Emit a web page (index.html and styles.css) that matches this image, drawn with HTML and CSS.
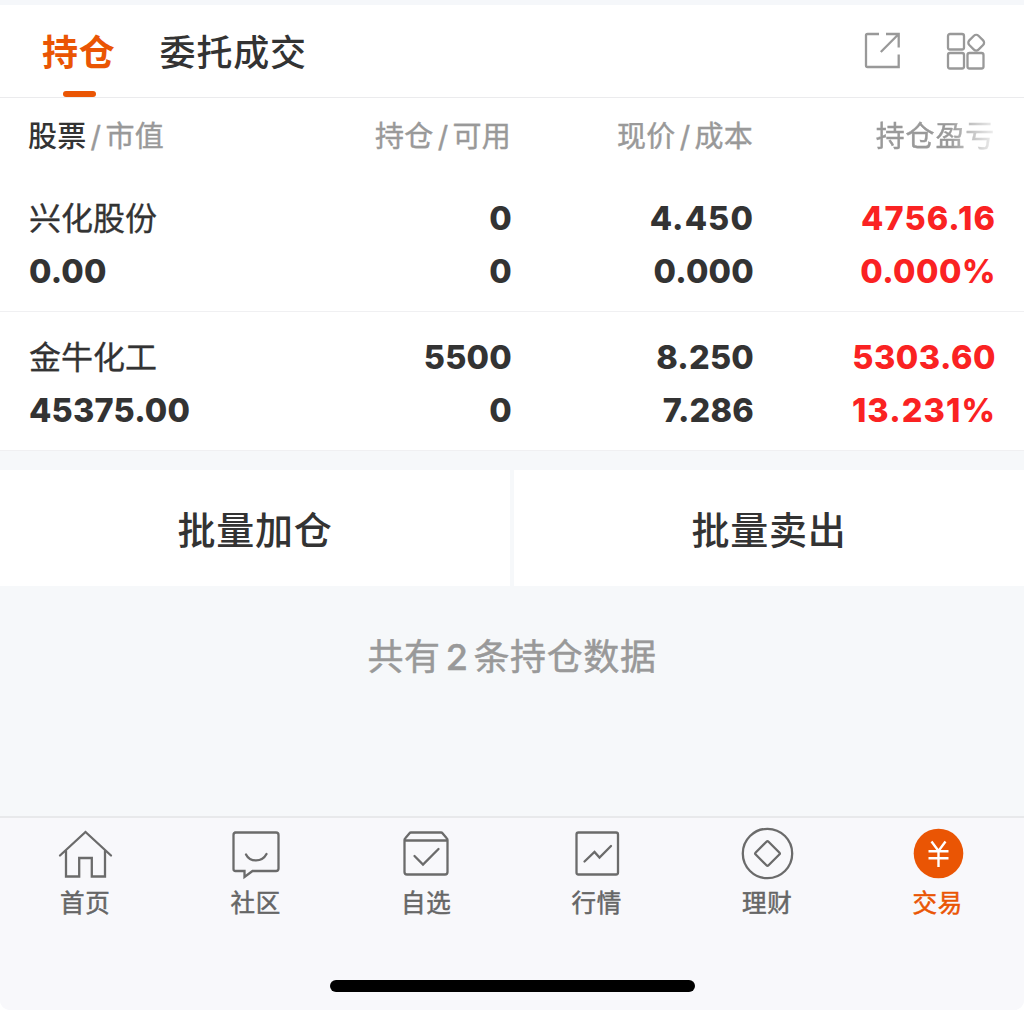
FILE: index.html
```html
<!DOCTYPE html>
<html lang="zh-CN">
<head>
<meta charset="utf-8">
<title>持仓</title>
<link rel="stylesheet" href="styles.css">
</head>
<body>
<div class="app">
  <header class="header">
    <nav class="tabs">
      <a class="tab tab-active">持仓</a>
      <a class="tab">委托成交</a>
    </nav>
    <div class="tools">
      <svg class="tool-icon" width="40" height="40" viewBox="0 0 40 40">
        <path d="M17 3H5.500Q4 3 4 4.500V34.500Q4 36 5.500 36H36.700V23.500M24 3H36.700V16.500M36.700 3L18.800 21"/>
      </svg>
      <svg class="tool-icon" width="42" height="40" viewBox="0 0 42 40">
        <rect x="4" y="3" width="16" height="15.500" rx="2"/>
        <rect x="4" y="22" width="16" height="15.500" rx="2"/>
        <rect x="23.500" y="22" width="16" height="15.500" rx="2"/>
        <rect x="25.700" y="5.200" width="13" height="13" rx="3.200" transform="rotate(45 32.200 11.700)"/>
      </svg>
    </div>
  </header>

  <main>
    <section class="table">
      <div class="row row-head">
        <div><span class="strong">股票</span><i>/</i>市值</div>
        <div>持仓<i>/</i>可用</div>
        <div>现价<i>/</i>成本</div>
        <div class="fade">持仓盈亏</div>
      </div>
      <div class="row">
        <div><span class="name">兴化股份</span><span>0.00</span></div>
        <div><span>0</span><span>0</span></div>
        <div><span class="wide">4.450</span><span>0.000</span></div>
        <div class="gain"><span class="wide">4756.16</span><span>0.000%</span></div>
      </div>
      <div class="row">
        <div><span class="name">金牛化工</span><span>45375.00</span></div>
        <div><span>5500</span><span>0</span></div>
        <div><span>8.250</span><span>7.286</span></div>
        <div class="gain"><span>5303.60</span><span class="wide">13.231%</span></div>
      </div>
    </section>
    <section class="actions">
      <div class="action">批量加仓</div>
      <div class="action">批量卖出</div>
    </section>
    <p class="summary">共有<b>2</b>条持仓数据</p>
  </main>

  <footer class="footer">
    <nav class="navbar">
      <a class="nav-item">
        <svg width="56" height="56" viewBox="0 0 56 56"><path d="M3 28.500L28.500 5L54 28.500M9 24V49.500H22.200V31H34.800V49.500H48V24"/></svg>
        <span>首页</span>
      </a>
      <a class="nav-item">
        <svg width="56" height="56" viewBox="0 0 56 56"><path d="M7 5.500H48Q50.500 5.500 50.500 8V41.500Q50.500 44 48 44H24.500L16.500 50V44H7.500Q5.500 44 5.500 42V8Q5.500 5.500 8 5.500M18 27.500C22 35.500 34 35.500 38.500 27"/></svg>
        <span>社区</span>
      </a>
      <a class="nav-item">
        <svg width="56" height="56" viewBox="0 0 56 56"><path d="M13 5.500H43Q44 5.500 44.500 6.300L48.500 11Q49.500 12 49.500 13V45Q49.500 47.500 47 47.500H9Q6.500 47.500 6.500 45V13Q6.500 12 7.500 11L11.500 6.300Q12 5.500 13 5.500ZM6.500 13.500H49.500M16.500 29L25 37.500L40.500 22"/></svg>
        <span>自选</span>
      </a>
      <a class="nav-item">
        <svg width="56" height="56" viewBox="0 0 56 56"><rect x="7.500" y="5.500" width="41.500" height="42" rx="2"/><path d="M15.500 34.500L25.500 25L30.500 30.500L42 19"/></svg>
        <span>行情</span>
      </a>
      <a class="nav-item">
        <svg width="56" height="56" viewBox="0 0 56 56"><circle cx="28.500" cy="26.500" r="24.700"/><rect x="19.400" y="17.400" width="18.200" height="18.200" rx="1.500" transform="rotate(45 28.500 26.500)"/></svg>
        <span>理财</span>
      </a>
      <a class="nav-item nav-active">
        <svg width="56" height="56" viewBox="0 0 56 56"><circle class="coin" cx="28.500" cy="26.500" r="24.800"/><path class="yen" d="M21.500 14.500L28.500 24L35.500 14.500M18.500 24.300H38.500M18.500 31.300H38.500M28.500 24V40"/></svg>
        <span>交易</span>
      </a>
    </nav>
    <div class="home-indicator"></div>
  </footer>
</div>
</body>
</html>
```
FILE: styles.css
```css
* { box-sizing: border-box; }
body {
  margin: 0;
  background: #fff;
  color: #333;
  font-family: Inter, "Noto Sans CJK SC", sans-serif;
}
.app {
  width: 1024px;
  height: 1010px;
  display: flex;
  flex-direction: column;
  background: #f6f8fa;
  border-top: 5px solid #f5f7fa;
  border-radius: 0 0 10px 10px;
  overflow: hidden;
}
.header {
  height: 93px;
  display: flex;
  justify-content: space-between;
  padding: 0 38px 0 42px;
  background: #fff;
  border-bottom: 1px solid #ebebed;
}
.tabs { display: flex; gap: 44px; }
.tab {
  position: relative;
  font-size: 36px;
  font-weight: 500;
  line-height: 96px;
  letter-spacing: 0.8px;
}
.tab-active { color: #ea5504; font-weight: 700; }
.tab-active::after {
  content: "";
  position: absolute;
  left: 21px;
  top: 86px;
  width: 33px;
  height: 6px;
  border-radius: 3px;
  background: #ea5504;
}
.tools { display: flex; gap: 42px; padding-top: 26px; }
.tool-icon { fill: none; stroke: #999; stroke-width: 2.300; }

.table { background: #fff; }
.row {
  display: grid;
  grid-template-columns: 240px 243px 242px 242px;
  padding: 19px 28px 14px 29px;
  height: 139px;
  border-bottom: 1px solid #f0f0f2;
  font-size: 32.500px;
  font-weight: 800;
  letter-spacing: 0.2px;
  line-height: 53px;
  text-align: right;
}
.row > div:first-child { text-align: left; }
.row span { display: block; }
.row .name {
  font-size: 32px;
  font-weight: 400;
  letter-spacing: 0;
  -webkit-text-stroke: 0.3px currentColor;
}
.gain { color: #fa2222; letter-spacing: 0.5px; }
.row .wide { letter-spacing: 1.100px; }
.row-head {
  height: 75px;
  padding: 0 29px 0 28px;
  border-bottom: 0;
  font-size: 29px;
  font-weight: 400;
  letter-spacing: 0.3px;
  line-height: 78px;
  color: #999;
  -webkit-text-stroke: 0.4px currentColor;
}
.row-head .strong { display: inline; color: #333; font-weight: 500; -webkit-text-stroke: 0; }
.row-head i { font-style: normal; padding: 0 4px; }
.fade {
  letter-spacing: 0.800px;
  -webkit-mask-image: linear-gradient(90deg, #000 196px, transparent 250px);
  mask-image: linear-gradient(90deg, #000 196px, transparent 250px);
}
.actions {
  display: grid;
  grid-template-columns: 510px 510px;
  gap: 4px;
  margin-top: 19px;
}
.action {
  height: 116px;
  background: #fff;
  font-size: 38px;
  font-weight: 500;
  line-height: 120px;
  letter-spacing: 0.8px;
  text-align: center;
}
.summary {
  margin: 0;
  padding-top: 41px;
  font-size: 36px;
  line-height: 60px;
  letter-spacing: 0.6px;
  color: #999;
  text-align: center;
  -webkit-text-stroke: 0.5px currentColor;
}
.summary b { font-weight: 500; padding: 0 5px; }

.footer {
  margin-top: auto;
  height: 194px;
  background: #f8f8fb;
  border-top: 2px solid #e8e9eb;
}
.navbar { display: grid; grid-template-columns: repeat(6, 1fr); margin-right: 1px; }
.nav-item {
  display: flex;
  flex-direction: column;
  align-items: center;
  padding-top: 9px;
  font-size: 24.500px;
  font-weight: 400;
  line-height: 41px;
  letter-spacing: 0.7px;
  color: #666;
  -webkit-text-stroke: 0.5px currentColor;
}
.nav-item svg { display: block; fill: none; stroke: #6b6b6b; stroke-width: 2.300; stroke-linecap: round; }
.nav-item span { display: block; }
.nav-active { color: #ea5504; }
.nav-item .coin { fill: #ea5504; stroke: none; }
.nav-item .yen { stroke: #fff; stroke-width: 2.400; stroke-linecap: butt; }
.home-indicator {
  width: 365px;
  height: 12px;
  margin: 55.500px auto 0;
  border-radius: 6px;
  background: #000;
}
```
